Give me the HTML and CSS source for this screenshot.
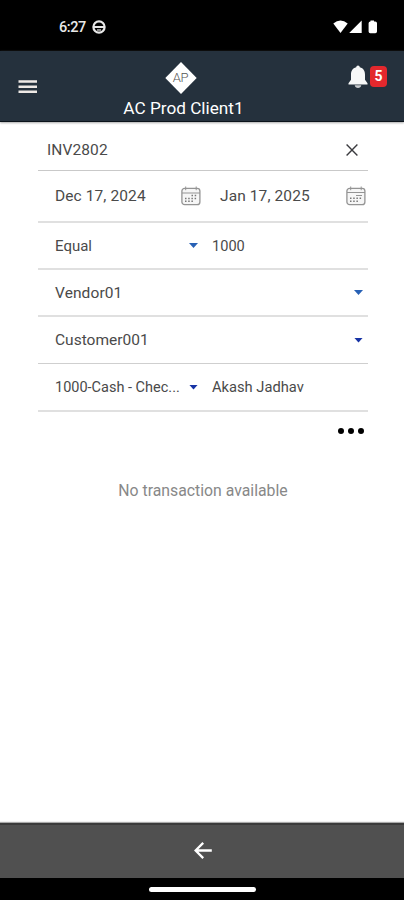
FILE: index.html
```html
<!DOCTYPE html>
<html lang="en">
<head>
<meta charset="utf-8">
<title>AC Prod Client1</title>
<link rel="stylesheet" href="styles.css">
</head>
<body>
<div class="screen">
  <div class="status">
    <span class="clock">6:27</span>
    <svg class="status-face" width="14" height="14" viewBox="0 0 14 14"><circle cx="7" cy="7" r="5.6" fill="none" stroke="#e8e8e8" stroke-width="2.200"/><path d="M1.5 7h11" stroke="#e8e8e8" stroke-width="2"/><path d="M5 10h4" stroke="#e8e8e8" stroke-width="1.200"/></svg>
    <svg class="status-icons" width="46" height="14" viewBox="0 0 46 14" fill="#fff"><path d="M.3 3.4Q7.500-2.400 14.700 3.400L7.500 13z"/><path d="M28.700.500V13H16.200z"/><path d="M37.500.500h3.500v1h1.300q1.700 0 1.700 1.800v8.100q0 1.800-1.700 1.800h-5q-1.700 0-1.700-1.800V3.300q0-1.800 1.700-1.800h.2z"/></svg>
  </div>
  <header class="header">
    <svg class="menu" width="20" height="16" viewBox="0 0 20 16"><path d="M.5 2.500h18.500M.5 7.700h18.500M.5 12.800h18.500" stroke="#eee9e6" stroke-width="2.400"/></svg>
    <div class="brand">
      <div class="logo"><svg width="32" height="32" viewBox="0 0 32 32"><path d="M16 0 31.700 16 16 32 .3 16z" fill="#fff"/></svg><span class="logo-text">AP</span></div>
      <div class="client">AC Prod Client1</div>
    </div>
    <div class="alerts">
      <svg width="20" height="24" viewBox="0 0 20 24"><path d="M10 .5q1.700 0 1.800 1.800c3.700.9 5.200 3.700 5.200 7.500v5l2.500 3.400v1.300H.5v-1.300L3 14.800v-5c0-3.800 1.500-6.600 5.200-7.500Q8.300.500 10 .5z" fill="#f7f8f8"/><path d="M6.700 20.300h6.600Q12.700 23 10 23t-3.300-2.700z" fill="#c9cccf"/></svg>
      <span class="badge">5</span>
    </div>
  </header>
  <main class="filters">
    <div class="row search"><span class="invoice">INV2802</span><svg class="clear" width="12" height="12" viewBox="0 0 12 12"><path d="M.6.6 11.400 11.400M11.400.6.6 11.400" stroke="#3b3b3f" stroke-width="1.400"/></svg></div>
    <div class="row dates">
      <span class="half first">Dec 17, 2024</span>
      <svg class="calendar" width="20" height="20" viewBox="0 0 20 20"><rect x=".9" y="2.300" width="18" height="16.300" rx="2.700" fill="#f6f6f6" stroke="#949494" stroke-width="1.300"/><path d="M1 7h18M4.700.5v3.700M15.200.5v3.700" stroke="#949494"/><path d="M10.500 9.500h5.500M4 12.500h12M4 15.300h9" stroke="#777" stroke-width="1.400" stroke-dasharray="1.500 1.700"/></svg>
      <span class="half second">Jan 17, 2025</span>
      <svg class="calendar" width="20" height="20" viewBox="0 0 20 20"><rect x=".9" y="2.300" width="18" height="16.300" rx="2.700" fill="#f6f6f6" stroke="#949494" stroke-width="1.300"/><path d="M1 6.500h18M4.700.5v3.700M15.200.5v3.700M10 9.500h6" stroke="#949494"/><path d="M4 12.300h12M4 15.300h9" stroke="#777" stroke-width="1.400" stroke-dasharray="1.500 1.700"/></svg>
    </div>
    <div class="row amount"><span class="choice equal">Equal</span><i class="caret blue"></i><span class="value number">1000</span></div>
    <div class="row vendor"><span>Vendor01</span><i class="caret blue"></i></div>
    <div class="row customer"><span>Customer001</span><i class="caret"></i></div>
    <div class="row account"><span class="choice cash">1000-Cash - Chec...</span><i class="caret"></i><span class="value person">Akash Jadhav</span></div>
    <div class="more"><i></i><i></i><i></i></div>
    <p class="empty">No transaction available</p>
  </main>
  <footer class="back"><svg width="18" height="17" viewBox="0 0 18 17"><path d="M9.200.9 1.600 8.500l7.600 7.600M1.800 8.500h16" fill="none" stroke="#fff" stroke-width="2.300"/></svg></footer>
  <div class="gesture"><i></i></div>
</div>
</body>
</html>
```
FILE: styles.css
```css
* { box-sizing: border-box; }
body { margin: 0; background: #fff; font-family: Roboto, "Liberation Sans", sans-serif; }
svg { display: block; flex: none; }
.screen { width: 404px; height: 900px; display: flex; flex-direction: column; overflow: hidden; }
.status { height: 51px; background: #000; display: flex; align-items: center; padding: 2px 25px 0 59px; flex: none; color: #e8e8e8; }
.clock { font-size: 14.5px; font-weight: 500; width: 33px; letter-spacing: -.4px; padding-top: 1px; }
.status-icons { margin-left: auto; }
.header { height: 71px; flex: none; background: #25313d; border-bottom: 1px solid #0b131b; box-shadow: 0 1px 2px #aaa; display: grid; grid-template-columns: 110px 1fr 110px; color: #fff; }
.menu { margin: 28px 0 0 18px; }
.brand { display: flex; flex-direction: column; align-items: center; width: 147px; padding-top: 10px; }
.logo { display: grid; place-items: center; height: 33px; margin-right: 6px; }
.logo > * { grid-area: 1 / 1; }
.logo-text { color: #555; font-size: 13px; font-weight: 300; line-height: 16px; letter-spacing: -.3px; }
.client { font-size: 17.2px; line-height: 20px; margin-top: 4px; white-space: nowrap; }
.alerts { display: flex; gap: 2px; padding: 14px 0 0 54px; }
.badge { width: 17px; height: 21px; margin-top: 1px; border-radius: 4px; background: #e3282d; font-size: 14px; line-height: 21px; font-weight: 700; text-align: center; }
.filters { width: 330px; margin-left: 38px; padding-top: 6px; flex: 1; color: #4a4a4a; font-size: 15.5px; }
.row { display: flex; align-items: center; border-bottom: 2px solid #e0e0e0; padding: 0 5px 0 17px; white-space: nowrap; }
.search { height: 43px; padding: 2px 10px 0 9px; justify-content: space-between; border-bottom-width: 1px; border-color: #c9c9c9; }
.invoice { letter-spacing: .1px; }
.dates { height: 52px; padding-right: 2px; letter-spacing: .1px; }
.half { width: 126px; }
.second { margin-left: 19px; }
.amount, .vendor { height: 47px; }
.vendor, .customer { justify-content: space-between; }
.vendor span { letter-spacing: .1px; }
.customer { height: 47px; border-bottom-width: 1px; border-color: #cfcfcf; }
.account { height: 48px; }
.choice { width: 134px; }
.equal { font-size: 15px; }
.cash { font-size: 14.5px; }
.value { margin-left: 14px; }
.number { font-size: 14.6px; }
.person { font-size: 14.7px; }
.caret { width: 9px; height: 5px; background: #1733a5; clip-path: polygon(0 0, 100% 0, 50% 100%); flex: none; }
.blue { background: #2861b5; }
.more { display: flex; justify-content: flex-end; gap: 4px; padding: 16px 4px 0 0; }
.more i { width: 6px; height: 6px; border-radius: 50%; background: #000; }
.empty { margin: 47px 0 0; text-align: center; line-height: 20px; font-size: 15.8px; color: #888; }
.back { height: 55px; flex: none; border-top: 2px solid #3b3b3b; box-shadow: 0 -1px 1px #aaa; background: #505050; display: flex; align-items: center; justify-content: center; padding: 0 0 2px 2px; }
.gesture { height: 22px; flex: none; background: #000; display: flex; justify-content: center; align-items: center; }
.gesture i { width: 107px; height: 5px; border-radius: 3px; background: #fff; }
```
